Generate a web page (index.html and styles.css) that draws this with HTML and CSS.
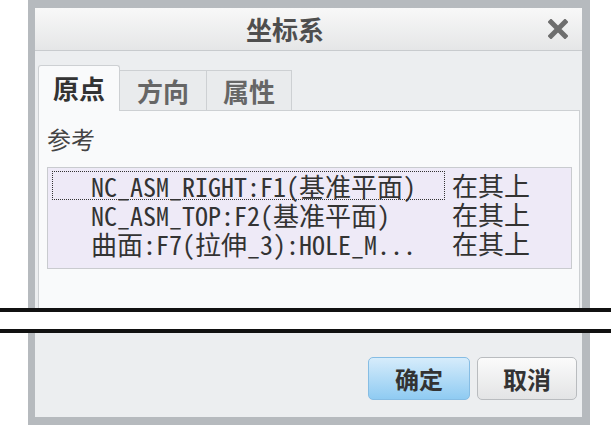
FILE: index.html
```html
<!DOCTYPE html>
<html lang="zh-CN">
<head>
  <meta charset="UTF-8" />
  <title>坐标系</title>
  <link rel="stylesheet" href="styles.css">
</head>
<body>
  <div class="frame frame-top">
    <div class="titlebar">
      <div class="title">坐标系</div>
      <div class="close">
        <svg width="20" height="20" viewBox="0 0 20 20">
          <path d="M3 3 L17 17 M17 3 L3 17" stroke="#6e6e6e" stroke-width="5" stroke-linecap="square" fill="none"/>
        </svg>
      </div>
    </div>

    <div class="body">
      <div class="tabs">
        <div class="tab tab-active">原点</div>
        <div class="tab tab-dir">方向</div>
        <div class="tab tab-prop">属性</div>
      </div>

      <div class="panel">
        <div class="label">参考</div>
        <div class="ref-list">
          <div class="ref-row ref-focus">
            <div class="ref-name">NC_ASM_RIGHT:F1(基准平面)</div>
            <div class="ref-type">在其上</div>
          </div>
          <div class="ref-row">
            <div class="ref-name">NC_ASM_TOP:F2(基准平面)</div>
            <div class="ref-type">在其上</div>
          </div>
          <div class="ref-row">
            <div class="ref-name">曲面:F7(拉伸_3):HOLE_M...</div>
            <div class="ref-type">在其上</div>
          </div>
        </div>
      </div>
    </div>
  </div>

  <!-- break marks -->
  <div class="cut"></div>

  <div class="frame frame-bottom">
    <div class="buttons">
      <button class="btn btn-ok">确定</button>
      <button class="btn">取消</button>
    </div>
  </div>
</body>
</html>
```

FILE: styles.css
```css
body {
  margin: 0;
  background-color: #ffffff;
  font-family: 'Noto Sans CJK SC', sans-serif;
  color: #333;
}

.frame {
  margin-left: 28px;
  width: 562px;
  box-sizing: border-box;
  border-left: 7px solid #b6babe;
  border-right: 8px solid #b6babe;
  background-color: #eceef0;
}

.frame-top {
  border-top: 8px solid #b6babe;
  height: 308px;
  display: flex;
  flex-direction: column;
}

.frame-bottom {
  border-bottom: 8px solid #b6babe;
  height: 92px;
}

.titlebar {
  height: 42px;
  border-bottom: 1px solid #c8cbce;
  background: linear-gradient(#f8f8f8, #e5e6e7);
  display: flex;
  align-items: center;
}

.title {
  flex: 1;
  text-align: center;
  font-size: 26px;
  font-weight: bold;
  color: #4e4e4e;
  line-height: 42px;
}

.close {
  width: 47px;
  box-sizing: border-box;
  padding-left: 13px;
  display: flex;
  align-items: center;
}

.body {
  flex: 1;
  display: flex;
  flex-direction: column;
  padding: 14px 2px 0 3px;
}

.tabs {
  display: flex;
  align-items: flex-end;
  height: 45px;
  position: relative;
  z-index: 1;
}

.tab {
  height: 40px;
  box-sizing: border-box;
  border: 1px solid #cdd0d3;
  border-bottom: none;
  border-left: none;
  background-color: #e9ebed;
  color: #666;
  font-size: 26px;
  font-weight: bold;
  text-align: center;
  line-height: 40px;
}

.tab-active {
  height: 46px;
  width: 82px;
  margin-bottom: -1px;
  border-left: 1px solid #cdd0d3;
  border-radius: 3px 3px 0 0;
  background-color: #f9fafb;
  color: #333;
  line-height: 44px;
}

.tab-dir {
  width: 87px;
}

.tab-prop {
  width: 85px;
}

.panel {
  flex: 1;
  background-color: #f9fafb;
  border: 1px solid #cdd0d3;
  border-bottom: none;
  padding: 13px 7px 0 8px;
}

.label {
  font-size: 24px;
  line-height: 30px;
  color: #444;
}

.ref-list {
  margin-top: 13px;
  border: 1px solid #c9cbcf;
  background-color: #eeeaf7;
  padding: 3px 4px 10px 4px;
  font-family: 'Noto Sans Mono CJK SC', 'Liberation Mono', 'Noto Sans CJK SC', monospace;
  font-size: 26px;
  color: #333;
}

.ref-row {
  display: flex;
  gap: 7px;
  height: 29px;
  line-height: 27px;
}

.ref-name {
  width: 393px;
  box-sizing: border-box;
  padding-left: 38px;
  border: 1px dotted transparent;
  white-space: nowrap;
}

.ref-focus .ref-name {
  border-color: #333;
}

.cut {
  height: 17px;
  border-top: 4px solid #111;
  border-bottom: 4px solid #111;
}

.buttons {
  display: flex;
  justify-content: flex-end;
  gap: 7px;
  padding: 24px 5px 0 0;
}

.btn {
  width: 100px;
  height: 43px;
  border: 1px solid #b9bcbf;
  border-radius: 5px;
  background: linear-gradient(#fbfbfb, #e3e4e5);
  font-family: 'Noto Sans CJK SC', sans-serif;
  font-size: 24px;
  font-weight: bold;
  color: #333;
  padding: 0;
}

.btn-ok {
  width: 102px;
  border-color: #86bde4;
  background: linear-gradient(#d6ecfb, #8fcbf2);
}
```
